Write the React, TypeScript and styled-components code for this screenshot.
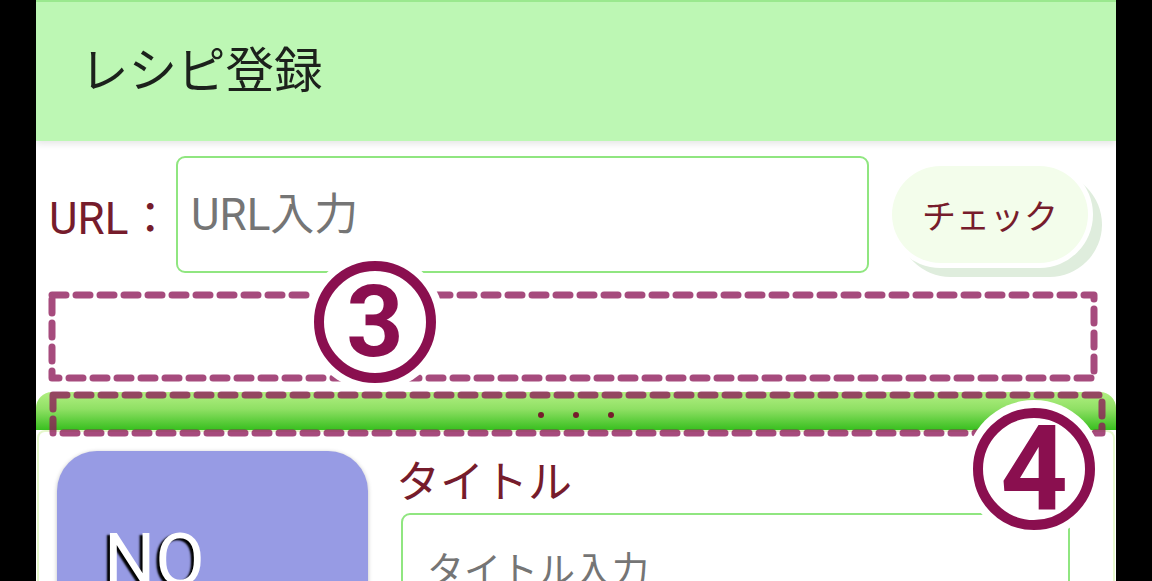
import React from 'react';
import styled, { createGlobalStyle } from 'styled-components';

const GlobalStyle = createGlobalStyle`
  html, body { margin: 0; padding: 0; background: #000; }
  body { font-family: Roboto, "Noto Sans CJK JP", sans-serif; }
  * { box-sizing: border-box; }
`;

const Screen = styled.div`
  width: 1152px;
  height: 581px;
  overflow: hidden;
  background: #000;
  display: flex;
  justify-content: center;
`;

const Column = styled.div`
  position: relative;
  width: 1080px;
  height: 581px;
  background: #fff;
  overflow: hidden;
  display: flex;
  flex-direction: column;
`;

const Header = styled.header`
  position: relative;
  z-index: 1;
  height: 141px;
  flex-shrink: 0;
  border-top: 2px solid #9ae88e;
  background: #bdf7b4;
  box-shadow: 0 3px 7px rgba(0, 0, 0, 0.1);
  display: flex;
  align-items: center;
  padding: 0 0 9px 44px;
  font-family: "Noto Sans CJK JP", sans-serif;
  font-size: 48.5px;
  color: #1c211c;
`;

const UrlRow = styled.div`
  display: flex;
  align-items: center;
  margin-top: 15px;
  padding-left: 12px;
  flex-shrink: 0;
`;

const FieldLabel = styled.span`
  width: 128px;
  padding-left: 1px;
  font-family: Roboto, "Noto Sans CJK JP", sans-serif;
  font-size: 44px;
  color: #761c2c;
  white-space: nowrap;
`;

const TextField = styled.input<{ $w: number; $size: number; $pad: number }>`
  width: ${(p) => p.$w}px;
  height: 117px;
  flex-shrink: 0;
  border: 2px solid #90e680;
  border-radius: 9px;
  padding: 0 0 0 ${(p) => p.$pad}px;
  background: #fff;
  outline: none;
  font-family: Roboto, "Noto Sans CJK JP", sans-serif;
  font-size: ${(p) => p.$size}px;
  color: #333;
  &::placeholder {
    color: #757575;
  }
`;

const TitleField = styled(TextField)`
  margin-left: 2px;
`;

const CheckButton = styled.button`
  margin-left: 23px;
  width: 196px;
  height: 97px;
  flex-shrink: 0;
  border: none;
  border-radius: 49px;
  background: #f3fdeb;
  color: #761c2c;
  font-family: "Noto Sans CJK JP", sans-serif;
  font-size: 34px;
  padding: 0;
  box-shadow: 0 0 0 5px #fff, 10px 10px 0 4px #dfeddd;
`;

const GreenBar = styled.div`
  margin-top: 119px;
  height: 38px;
  flex-shrink: 0;
  border-radius: 16px 16px 0 0;
  background: linear-gradient(#b2ef82, #8fe064 45%, #38bf1f);
  display: flex;
  justify-content: center;
  align-items: center;
  gap: 29px;
  padding-top: 8px;
`;

const Dot = styled.span`
  width: 6px;
  height: 6px;
  border-radius: 50%;
  background: #761c2c;
`;

const Card = styled.section`
  flex: 1;
  margin: 0 1px;
  border: 2px solid #e6f8cc;
  border-bottom: none;
  border-radius: 8px 8px 0 0;
  display: flex;
  gap: 31px;
  padding: 19px 43px 0 18px;
`;

const Photo = styled.div`
  width: 311px;
  height: 311px;
  flex-shrink: 0;
  border-radius: 40px;
  background: #979be4;
  box-shadow: 0 1px 4px rgba(0, 0, 0, 0.25);
  padding: 70px 30px 0 47px;
  font-family: Roboto, sans-serif;
  font-size: 72px;
  line-height: 1.1;
  color: #fff;
  text-shadow: -3px 2px 2px #000;
`;

const Fields = styled.div`
  display: flex;
  flex-direction: column;
  width: 671px;
`;

const SectionLabel = styled.div`
  margin: 6px 0 12px -3px;
  font-family: "Noto Sans CJK JP", sans-serif;
  font-size: 44px;
  line-height: 44px;
  color: #761c2c;
`;

const DashedFrame = styled.svg<{ $x: number; $y: number }>`
  position: absolute;
  left: ${(p) => p.$x - 6}px;
  top: ${(p) => p.$y - 6}px;
  overflow: visible;
  pointer-events: none;
  z-index: 2;
`;

const Callout = styled.div<{ $x: number; $y: number; $size: number }>`
  position: absolute;
  left: ${(p) => p.$x}px;
  top: ${(p) => p.$y}px;
  width: 122px;
  height: 122px;
  border: 10px solid #8a0f4f;
  border-radius: 50%;
  background: #fff;
  box-shadow: 0 0 0 8px #fff;
  display: flex;
  align-items: center;
  justify-content: center;
  font-family: Roboto, "Noto Sans", sans-serif;
  font-weight: 700;
  font-size: ${(p) => p.$size}px;
  line-height: 1;
  color: #8a0f4f;
  z-index: 3;
`;

function Frame({ x, y, w, h }: { x: number; y: number; w: number; h: number }) {
  return (
    <DashedFrame $x={x} $y={y} width={w + 12} height={h + 12}>
      <rect
        x={6}
        y={6}
        width={w}
        height={h}
        fill="none"
        stroke="rgba(141,24,89,0.78)"
        strokeWidth={7}
        strokeDasharray="14 10"
        strokeLinecap="round"
        strokeLinejoin="round"
      />
    </DashedFrame>
  );
}

export default function App() {
  return (
    <>
      <GlobalStyle />
      <Screen>
        <Column>
          <Header>レシピ登録</Header>
          <UrlRow>
            <FieldLabel>URL：</FieldLabel>
            <TextField $w={693} $size={44} $pad={13} placeholder="URL入力" />
            <CheckButton>チェック</CheckButton>
          </UrlRow>
          <GreenBar>
            <Dot />
            <Dot />
            <Dot />
          </GreenBar>
          <Card>
            <Photo>NO IMAGE</Photo>
            <Fields>
              <SectionLabel>タイトル</SectionLabel>
              <TitleField $w={669} $size={37} $pad={24} placeholder="タイトル入力" />
            </Fields>
          </Card>
          <Frame x={16} y={295} w={1042} h={83} />
          <Frame x={17} y={395} w={1049} h={38} />
          <Callout $x={278} $y={261} $size={100}>3</Callout>
          <Callout $x={937} $y={408} $size={118}>4</Callout>
        </Column>
      </Screen>
    </>
  );
}
